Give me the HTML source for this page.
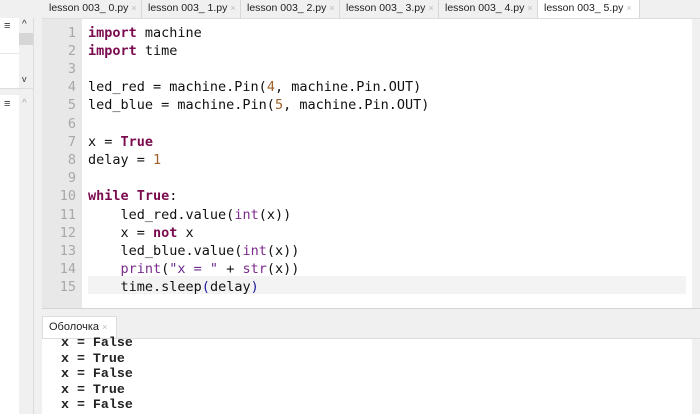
<!DOCTYPE html><html><head><meta charset="utf-8"><style>
*{margin:0;padding:0;box-sizing:border-box}
body{width:700px;height:414px;overflow:hidden;background:#f0f0f0;position:relative;font-family:"Liberation Sans",sans-serif}
.abs{position:absolute}
.tab{position:absolute;top:0;height:18px;font-size:10.5px;color:#222;padding:2px 0 0 6px;border-right:1px solid #d8d8d8;background:#f0f0f0;white-space:nowrap}
.tab span{color:#bbb;font-size:9px;margin-left:3px}
.code{position:absolute;left:88px;top:23.5px;font-family:"DejaVu Sans Mono",monospace;font-size:13.5px;line-height:18.2px;color:#111;white-space:pre}
.nums{position:absolute;left:42px;width:34px;top:23.5px;font-family:"DejaVu Sans Mono",monospace;font-size:13.5px;line-height:18.2px;color:#a8a8a8;text-align:right;white-space:pre}
.k{color:#7a0b4e;font-weight:bold}.n{color:#a0622a}.b{color:#7b2a8b}.s{color:#6a2a8a}.p{color:#1a1a9a}
.sh{position:absolute;left:61px;top:335px;font-family:"Liberation Mono",monospace;font-size:13.3px;line-height:15.5px;color:#222;white-space:pre;font-weight:bold}
</style></head><body>
<div class="abs" style="left:0;top:18px;width:19px;height:396px;background:#fff"></div>
<div class="abs" style="left:19px;top:18px;width:14px;height:396px;background:#f0f0f0"></div>
<div class="abs" style="left:19px;top:33px;width:14px;height:12px;background:#d6d6d6"></div>
<div class="abs" style="left:0;top:53px;width:19px;height:1px;background:#e8e8e8"></div>
<div class="abs" style="left:0;top:88px;width:33px;height:7px;background:#f0f0f0;border-top:1px solid #ddd"></div>
<div class="abs" style="left:4px;top:20px;font-size:11px;color:#333">≡</div>
<div class="abs" style="left:22px;top:19px;font-size:10px;color:#333">^</div>
<div class="abs" style="left:22px;top:74px;font-size:9px;color:#333">v</div>
<div class="abs" style="left:4px;top:98px;font-size:11px;color:#333">≡</div>
<div class="abs" style="left:22px;top:98px;font-size:10px;color:#aaa">^</div>
<div class="abs" style="left:33px;top:18px;width:1px;height:396px;background:#dcdcdc"></div>
<div class="tab" style="left:43px;width:99px">lesson 003_ 0.py<span>×</span></div>
<div class="tab" style="left:142px;width:99px">lesson 003_ 1.py<span>×</span></div>
<div class="tab" style="left:241px;width:99px">lesson 003_ 2.py<span>×</span></div>
<div class="tab" style="left:340px;width:99px">lesson 003_ 3.py<span>×</span></div>
<div class="tab" style="left:439px;width:99px">lesson 003_ 4.py<span>×</span></div>
<div class="tab" style="left:538px;width:102px;background:#fff;height:19px">lesson 003_ 5.py<span>×</span></div>
<div class="abs" style="left:42px;top:18px;width:658px;height:291px;background:#fff;border-top:1px solid #ddd;border-bottom:1px solid #d4d4d4"></div>
<div class="abs" style="left:42px;top:19px;width:40px;height:289px;background:#e8e8e8"></div>
<div class="abs" style="left:88px;top:276px;width:598px;height:18px;background:#f3f3f3"></div>
<div class="abs" style="left:692px;top:19px;width:8px;height:289px;background:#f0f0f0"></div>
<div class="nums">1
2
3
4
5
6
7
8
9
10
11
12
13
14
15</div>
<div class="code"><span class="k">import</span> machine
<span class="k">import</span> time

led_red = machine.Pin(<span class="n">4</span>, machine.Pin.OUT)
led_blue = machine.Pin(<span class="n">5</span>, machine.Pin.OUT)

x = <span class="k">True</span>
delay = <span class="n">1</span>

<span class="k">while</span> <span class="k">True</span>:
    led_red.value(<span class="b">int</span>(x))
    x = <span class="k">not</span> x
    led_blue.value(<span class="b">int</span>(x))
    <span class="b">print</span>(<span class="s">"x = "</span> + <span class="b">str</span>(x))
    time.sleep<span class="p">(</span>delay<span class="p">)</span></div>
<div class="abs" style="left:42px;top:316px;width:75px;height:23px;background:#fff;border:1px solid #ddd;border-bottom:none;font-size:11px;padding:4px 0 0 6px;color:#222">Оболочка <span style="color:#bbb;font-size:9px">×</span></div>
<div class="abs" style="left:42px;top:338px;width:658px;height:76px;background:#fff;border-top:1px solid #ddd"></div>
<div class="abs" style="left:692px;top:339px;width:8px;height:75px;background:#f0f0f0"></div>
<div class="sh">x = False
x = True
x = False
x = True
x = False</div>
</body></html>
